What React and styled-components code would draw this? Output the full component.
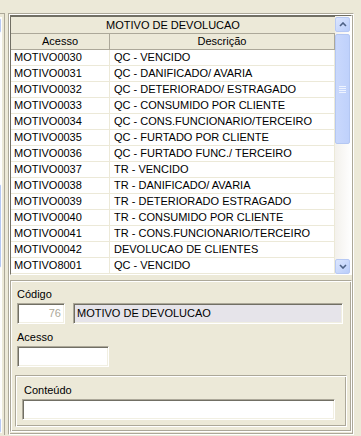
import styled, { createGlobalStyle } from "styled-components";

const GlobalStyle = createGlobalStyle`
  html, body {
    margin: 0;
    padding: 0;
    background: #ece9d8;
  }
  body {
    font-family: "Liberation Sans", Arial, sans-serif;
    font-size: 11px;
    color: #000;
  }
`;

const rows = [
  ["MOTIVO0030", "QC - VENCIDO"],
  ["MOTIVO0031", "QC - DANIFICADO/ AVARIA"],
  ["MOTIVO0032", "QC - DETERIORADO/ ESTRAGADO"],
  ["MOTIVO0033", "QC - CONSUMIDO POR CLIENTE"],
  ["MOTIVO0034", "QC - CONS.FUNCIONARIO/TERCEIRO"],
  ["MOTIVO0035", "QC - FURTADO POR CLIENTE"],
  ["MOTIVO0036", "QC - FURTADO FUNC./ TERCEIRO"],
  ["MOTIVO0037", "TR - VENCIDO"],
  ["MOTIVO0038", "TR - DANIFICADO/ AVARIA"],
  ["MOTIVO0039", "TR - DETERIORADO ESTRAGADO"],
  ["MOTIVO0040", "TR - CONSUMIDO POR CLIENTE"],
  ["MOTIVO0041", "TR - CONS.FUNCIONARIO/TERCEIRO"],
  ["MOTIVO0042", "DEVOLUCAO DE CLIENTES"],
  ["MOTIVO8001", "QC - VENCIDO"],
];

const Page = styled.div`
  display: flex;
  height: 436px;
  padding-top: 13px;
  box-sizing: border-box;
`;

const Side = styled.div`
  width: 5px;
  height: 422px;
  border-top: 1px solid #aca899;
  border-right: 1px solid #aca899;
  overflow: hidden;
  display: flex;
  justify-content: flex-end;
  padding: 3px 2px 3px 0;
  box-sizing: border-box;
`;

const Frame = styled.div`
  margin-left: 3px;
  width: 346px;
  height: 422px;
  box-sizing: border-box;
  border: 1px solid;
  border-color: #aca899 #fff #fff #aca899;
  box-shadow: inset 1px 1px #fff, inset -1px -1px #aca899;
  padding: 1px;
  display: flex;
  flex-direction: column;
`;

const Grid = styled.div`
  display: flex;
  height: 259px;
  border: 1px solid;
  border-color: #716f64 #fff #fff #716f64;
  background: #fff;
`;

const Table = styled.div`
  flex: 1;
  display: flex;
  flex-direction: column;
  background: #fff;
  border-top: 1px solid #716f64;
`;

const Title = styled.div`
  height: 16px;
  line-height: 16px;
  text-align: center;
  background: #ece9d8;
  border-bottom: 1px solid #aca899;
`;

const HeadRow = styled.div`
  display: grid;
  grid-template-columns: 99px 1fr;
  height: 15px;
  background: #ece9d8;
  border-bottom: 1px solid #aca899;
`;

const HeadCell = styled.div`
  text-align: center;
  line-height: 15px;
  border-right: 1px solid #aca899;
`;

const Row = styled.div`
  display: grid;
  grid-template-columns: 99px 1fr;
  height: 16px;
  border-bottom: 1px solid #ece9d8;
  box-sizing: border-box;
`;

const Cell = styled.div`
  padding-left: ${(p) => p.$pad}px;
  line-height: 15px;
  white-space: nowrap;
  overflow: hidden;
  border-right: 1px solid #ece9d8;
`;

const ScrollBar = styled.div`
  width: 16px;
  flex: none;
  display: flex;
  flex-direction: column;
  background: linear-gradient(to right, #f3f1ec, #fefefe);
  padding-top: 1px;
  box-sizing: border-box;
`;

const ArrowButton = styled.div`
  height: 15px;
  margin: 0 1px 0 0;
  border: 1px solid #b7c9f4;
  border-radius: 2px;
  background: linear-gradient(to bottom right, #dce6fe, #b9cdfa);
  box-sizing: border-box;
  display: flex;
  align-items: center;
  justify-content: center;
`;

const Track = styled.div`
  flex: 1;
  display: flex;
  flex-direction: column;
  padding-top: ${(p) => p.$offset}px;
`;

const Thumb = styled.div`
  height: ${(p) => p.$size}px;
  margin-right: 1px;
  border: 1px solid #b4c7f2;
  border-radius: 2px;
  background: linear-gradient(to right, #c9d8fc, #bfd1fb);
  box-sizing: border-box;
  display: flex;
  align-items: center;
  justify-content: center;
`;

const Lower = styled.div`
  margin-top: 5px;
  flex: 1;
  margin-bottom: 2px;
  border: 1px solid;
  border-color: #aca899 #fff #fff #aca899;
  box-shadow: inset 1px 1px #fff, inset -1px -1px #aca899;
  padding: 7px 5px 4px 6px;
  display: flex;
  flex-direction: column;
`;

const Label = styled.div`
  height: 13px;
  line-height: 13px;
  margin-left: ${(p) => p.$indent || 0}px;
`;

const FieldRow = styled.div`
  display: flex;
  gap: 8px;
  margin-top: 2px;
`;

const Input = styled.div`
  width: ${(p) => p.$w}px;
  height: 21px;
  box-sizing: border-box;
  border: 1px solid;
  border-color: #aca899 #fff #fff #aca899;
  box-shadow: inset 1px 1px #716f64, inset -1px -1px #f1efe2;
  background: ${(p) => p.$bg || "#fff"};
  color: ${(p) => p.$muted ? "#aca899" : "#000"};
  text-align: ${(p) => p.$right ? "right" : "left"};
  padding: 0 3px;
  line-height: 19px;
  white-space: nowrap;
`;

const Group = styled.div`
  margin-top: 8px;
  margin-left: -2px;
  margin-right: -1px;
  flex: 1;
  border: 1px solid;
  border-color: #aca899 #fff #fff #aca899;
  box-shadow: inset 1px 1px #fff, inset -1px -1px #aca899;
  padding: 8px 10px 6px 6px;
  display: flex;
  flex-direction: column;
`;

const Arrow = ({ down }) => (
  <svg width="8" height="5" viewBox="0 0 8 5">
    <path
      d={down ? "M1 1 L4 4 L7 1" : "M1 4 L4 1 L7 4"}
      fill="none"
      stroke="#4d6185"
      strokeWidth="1.6"
    />
  </svg>
);

const Grip = () => (
  <svg width="7" height="7" viewBox="0 0 7 7">
    {[0, 2, 4, 6].map((y) => (
      <line key={y} x1="0" x2="7" y1={y + 0.5} y2={y + 0.5} stroke="#eef3ff" />
    ))}
  </svg>
);

const VScroll = ({ offset, size, height }) => (
  <ScrollBar style={height ? { height } : undefined}>
    <ArrowButton>
      <Arrow />
    </ArrowButton>
    <Track $offset={offset}>
      <Thumb $size={size}>{size > 20 ? <Grip /> : null}</Thumb>
    </Track>
    <ArrowButton>
      <Arrow down />
    </ArrowButton>
  </ScrollBar>
);

export default function App() {
  return (
    <>
      <GlobalStyle />
      <Page>
        <Side>
          <VScroll offset={151} size={84} height={416} />
        </Side>
        <Frame>
          <Grid>
            <Table>
              <Title>MOTIVO DE DEVOLUCAO</Title>
              <HeadRow>
                <HeadCell>Acesso</HeadCell>
                <HeadCell>Descrição</HeadCell>
              </HeadRow>
              {rows.map(([code, desc]) => (
                <Row key={code}>
                  <Cell $pad={3}>{code}</Cell>
                  <Cell $pad={4}>{desc}</Cell>
                </Row>
              ))}
            </Table>
            <VScroll offset={2} size={110} />
          </Grid>
          <Lower>
            <Label>Código</Label>
            <FieldRow>
              <Input $w={48} $muted $right>76</Input>
              <Input $w={270} $bg="#e6e4ea">MOTIVO DE DEVOLUCAO</Input>
            </FieldRow>
            <Label style={{ marginTop: 7 }}>Acesso</Label>
            <FieldRow>
              <Input $w={92} />
            </FieldRow>
            <Group>
              <Label $indent={2}>Conteúdo</Label>
              <FieldRow>
                <Input $w={313} />
              </FieldRow>
            </Group>
          </Lower>
        </Frame>
      </Page>
    </>
  );
}
